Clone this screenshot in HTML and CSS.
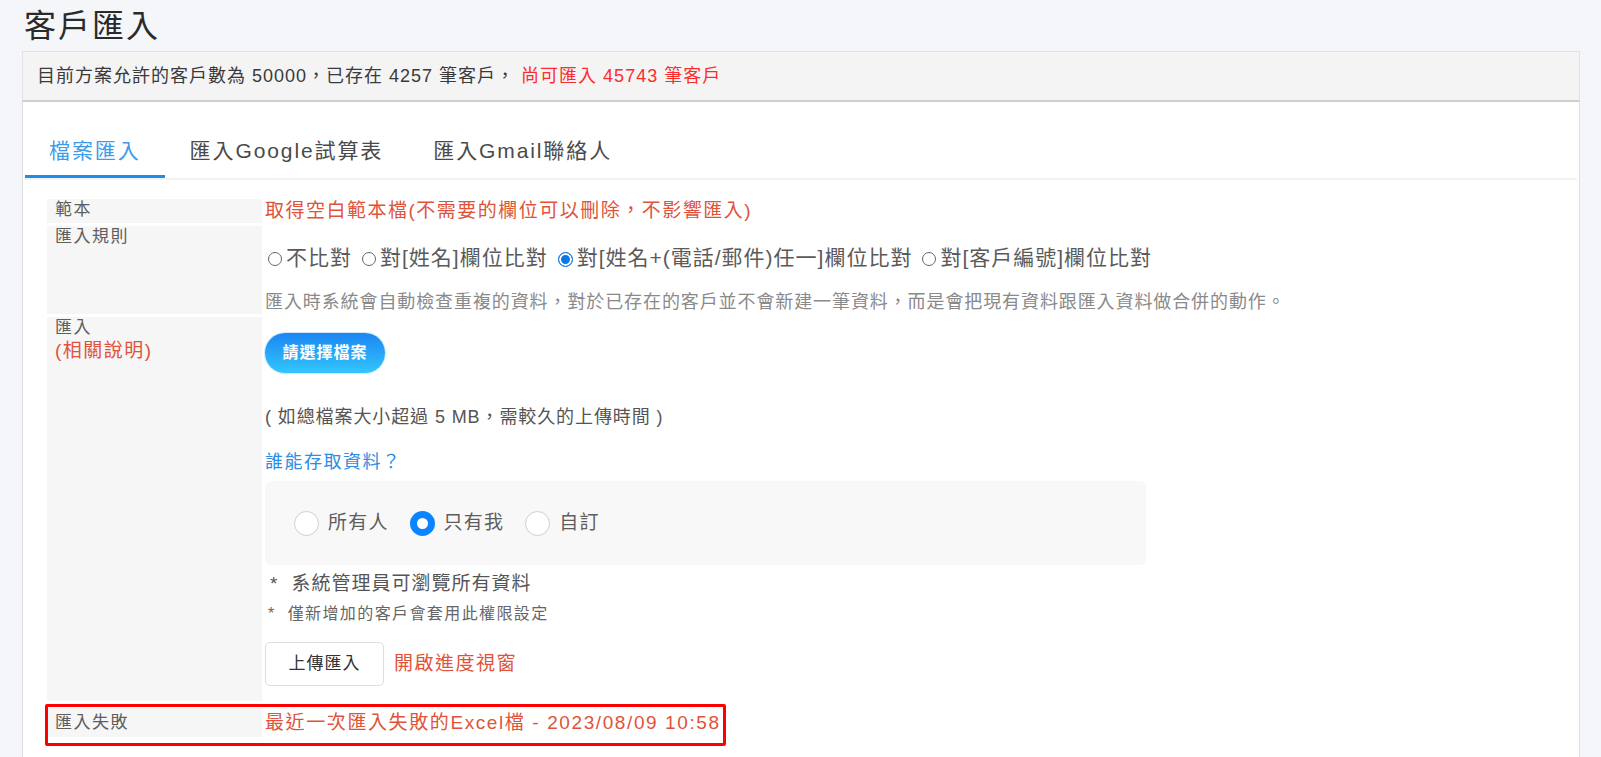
FILE: index.html
```html
<!DOCTYPE html>
<html lang="zh-Hant">
<head>
<meta charset="utf-8">
<title>客戶匯入</title>
<link rel="stylesheet" href="styles.css">
</head>
<body>
<div class="page">
  <h1 class="title">客戶匯入</h1>
  <div class="quota">目前方案允許的客戶數為 50000，已存在 4257 筆客戶， <span class="quota-left">尚可匯入 45743 筆客戶</span></div>
  <div class="panel">
    <div class="tabs">
      <div class="tab active">檔案匯入</div>
      <div class="tab">匯入Google試算表</div>
      <div class="tab">匯入Gmail聯絡人</div>
    </div>
    <div class="form">
      <div class="row row-template">
        <div class="label">範本</div>
        <div class="value"><span class="link-red">取得空白範本檔(不需要的欄位可以刪除，不影響匯入)</span></div>
      </div>
      <div class="row">
        <div class="label">匯入規則</div>
        <div class="value">
          <div class="rules">
            <span class="rc"></span><span class="rt">不比對</span>
            <span class="rc"></span><span class="rt">對[姓名]欄位比對</span>
            <span class="rc on"></span><span class="rt">對[姓名+(電話/郵件)任一]欄位比對</span>
            <span class="rc"></span><span class="rt">對[客戶編號]欄位比對</span>
          </div>
          <div class="desc">匯入時系統會自動檢查重複的資料，對於已存在的客戶並不會新建一筆資料，而是會把現有資料跟匯入資料做合併的動作。</div>
        </div>
      </div>
      <div class="row">
        <div class="label">匯入<br><span class="link-red help">(相關說明)</span></div>
        <div class="value">
          <div class="pick-btn">請選擇檔案</div>
          <div class="size-note">( 如總檔案大小超過 5 MB，需較久的上傳時間 )</div>
          <div class="who">誰能存取資料？</div>
          <div class="perm">
            <span class="pr"></span><span class="pt">所有人</span>
            <span class="pr on"></span><span class="pt">只有我</span>
            <span class="pr"></span><span class="pt">自訂</span>
          </div>
          <div class="note1"><span class="star">*</span>系統管理員可瀏覽所有資料</div>
          <div class="note2"><span class="star">*</span>僅新增加的客戶會套用此權限設定</div>
          <div class="upload-line">
            <div class="upload-btn">上傳匯入</div>
            <span class="link-red progress">開啟進度視窗</span>
          </div>
        </div>
      </div>
      <div class="row row-fail">
        <div class="label">匯入失敗</div>
        <div class="value"><span class="link-red">最近一次匯入失敗的Excel檔 - 2023/08/09 10:58</span></div>
      </div>
    </div>
  </div>
</div>
</body>
</html>
```
FILE: styles.css
```css
* { box-sizing: border-box; }
html, body { margin: 0; }
body {
  background: #f5f6fa;
  font-family: "Liberation Sans", "Noto Sans CJK TC", sans-serif;
  color: #5e5e5e;
  height: 757px;
  overflow: hidden;
}
.page { padding: 0 21px 0 22px; }
.title {
  margin: 0;
  padding: 4px 0 0 2px;
  font-size: 32px;
  line-height: 44px;
  font-weight: 400;
  color: #2a2a2a;
  letter-spacing: 2px;
}
.quota {
  margin-top: 3px;
  height: 51px;
  background: #f4f4f4;
  border: 1px solid #e2e2e2;
  border-bottom: 2px solid #cfcfcf;
  padding: 0 14px;
  font-size: 18px;
  line-height: 48px;
  color: #3a3a3a;
  letter-spacing: 1px;
}
.quota-left { color: #ff2b2b; }

.panel {
  background: #fff;
  border-left: 1px solid #dedede;
  border-right: 1px solid #dedede;
  padding: 0 2px;
  height: 660px;
}
.tabs {
  display: flex;
  border-bottom: 2px solid #f2f2f2;
  padding-top: 34px;
}
.tab {
  padding: 0 25px 9px;
  font-size: 21px;
  line-height: 30px;
  letter-spacing: 1.9px;
  color: #4a4a4a;
  border-bottom: 3px solid transparent;
}
.tab.active { color: #3d9be9; border-bottom-color: #1f8ceb; padding: 0 24px 9px; }

.form {
  margin: 19px 0 0 22px;
  display: flex;
  flex-direction: column;
  gap: 3px;
}
.row { display: flex; gap: 2px; }
.label {
  width: 215px;
  flex: none;
  background: #f6f6f6;
  padding: 0 8px;
  font-size: 17px;
  line-height: 22px;
  letter-spacing: 1.5px;
  color: #5e5e5e;
}
.label .help { font-size: 19px; line-height: 24px; }
.value {
  flex: 1;
  padding-left: 1px;
  font-size: 18px;
  line-height: 24px;
  letter-spacing: 1.2px;
}
.link-red { color: #e0533a; }
.row-template .value { font-size: 19px; letter-spacing: 1.5px; }

.rules {
  margin-top: 18px;
  font-size: 21px;
  line-height: 28px;
  letter-spacing: 1px;
  color: #5a5a5a;
  display: flex;
  align-items: center;
}
.rc {
  width: 14px;
  height: 14px;
  border-radius: 50%;
  border: 1px solid #666;
  margin: 2px 4px 0 3px;
  flex: none;
}
.rc.on {
  width: 15px;
  height: 15px;
  border-color: #0b76e8;
  background: #0b76e8;
  box-shadow: inset 0 0 0 2px #fff;
}
.rt { margin-right: 7px; }
.desc {
  margin-top: 18px;
  color: #8a8a8a;
  letter-spacing: 0.9px;
}

.pick-btn {
  margin-top: 16px;
  width: 120px;
  height: 40px;
  border-radius: 20px;
  background: linear-gradient(#1b86f3, #33c6fc);
  box-shadow: 0 0 0 1px #cfe9fb;
  color: #fff;
  font-size: 16px;
  font-weight: 700;
  line-height: 40px;
  text-align: center;
  letter-spacing: 1px;
}
.size-note { margin-top: 32px; color: #555; letter-spacing: 0.9px; }
.who { margin-top: 21px; color: #2b8de3; letter-spacing: 1.5px; }
.perm {
  margin-top: 7px;
  width: 881px;
  height: 84px;
  background: #f8f8f8;
  border-radius: 6px;
  padding-left: 29px;
  display: flex;
  align-items: center;
  font-size: 19px;
  color: #5e5e5e;
}
.pr {
  width: 25px;
  height: 25px;
  border-radius: 50%;
  border: 1px solid #cfcfcf;
  background: #fff;
  flex: none;
  margin-right: 9px;
}
.pr.on { border: 7px solid #0a84ff; }
.pt { margin-right: 21px; }
.note1 {
  margin-top: 7px;
  font-size: 19px;
  letter-spacing: 1px;
  color: #555;
  padding-left: 5px;
}
.note1 .star { margin-right: 13px; }
.note2 {
  margin-top: 7px;
  font-size: 16px;
  line-height: 22px;
  letter-spacing: 1.4px;
  color: #666;
  padding-left: 3px;
}
.note2 .star { margin-right: 12px; }
.upload-line {
  margin: 17px 0 15px;
  display: flex;
  align-items: center;
  gap: 10px;
}
.upload-btn {
  width: 119px;
  height: 44px;
  border: 1px solid #ddd;
  border-radius: 5px;
  background: #fff;
  font-size: 17px;
  line-height: 42px;
  text-align: center;
  color: #333;
  letter-spacing: 1px;
}
.progress { font-size: 19px; letter-spacing: 1.5px; }

.row-fail { margin-top: 4px; position: relative; }
.row-fail .label,
.row-fail .value { line-height: 29px; height: 29px; }
.row-fail .value { font-size: 19px; letter-spacing: 1.6px; }
.row-fail::after {
  content: "";
  position: absolute;
  left: -2px;
  top: -4px;
  width: 675px;
  height: 36px;
  border: 3px solid #ff0000;
  border-radius: 2px;
}
```
